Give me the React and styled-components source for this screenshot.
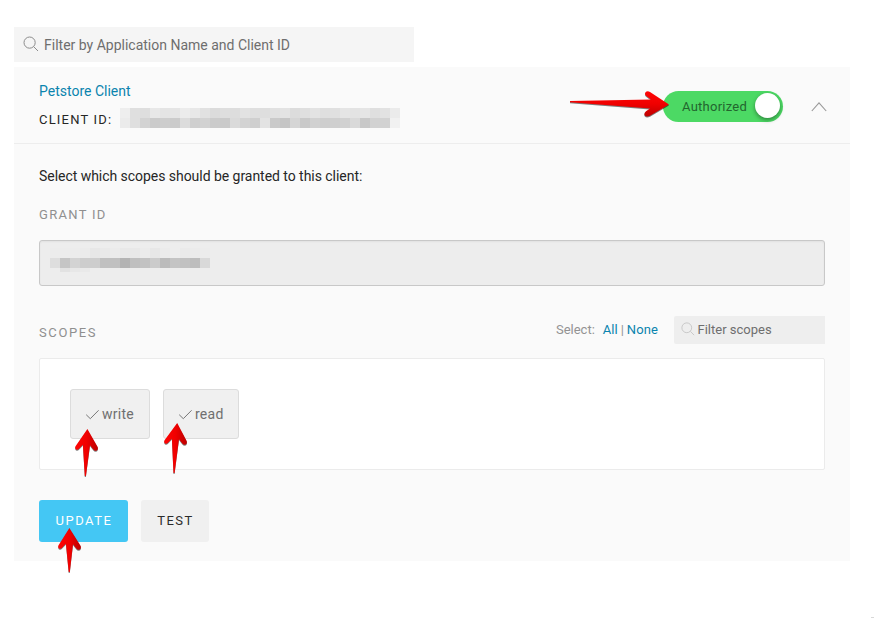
import React from 'react';
import styled, { createGlobalStyle } from 'styled-components';

const GlobalStyle = createGlobalStyle`
  * { box-sizing: border-box; }
  body {
    margin: 0;
    background: #fff;
    color: #262626;
    font: 400 14px/20px Roboto, sans-serif;
  }
`;

const Page = styled.main`
  position: relative;
  width: 874px;
  height: 618px;
  padding: 27px 24px 0 14px;
  overflow: hidden;
`;

const SearchBox = styled.label`
  display: flex;
  align-items: center;
  gap: ${p => (p.$small ? 2.5 : 5)}px;
  width: ${p => (p.$small ? 151 : 400)}px;
  height: ${p => (p.$small ? 28 : 35)}px;
  padding-left: ${p => (p.$small ? 7 : 9)}px;
  background: ${p => (p.$small ? '#eeeeee' : '#f5f5f5')};
  border-radius: ${p => (p.$small ? '2px 0 0 2px' : 0)};
  color: #6e6e6e;
  font-size: ${p => (p.$small ? 13 : 14)}px;
  padding-top: ${p => (p.$small ? 0 : 1)}px;

  svg {
    position: relative;
    top: -1px;
    flex: none;
    color: ${p => (p.$small ? '#c4c4c4' : '#8c8c8c')};
  }
`;

const Panel = styled.section`
  width: 836px;
  height: 494px;
  margin-top: 5px;
  background: #fafafa;
`;

const PanelHeader = styled.header`
  display: flex;
  align-items: flex-start;
  height: 77px;
  padding: 14px 23px 0 25px;
  border-bottom: 1px solid #ededed;
`;

const ClientInfo = styled.div`
  flex: 1;
`;

const ClientName = styled.a`
  display: block;
  color: #0a84ae;
`;

const ClientId = styled.div`
  display: flex;
  align-items: flex-start;
  margin-top: 7px;
`;

const Caps = styled.span`
  font-size: 13px;
  line-height: ${p => p.$line ?? 22}px;
  letter-spacing: ${p => p.$spacing ?? 1.3}px;
  color: ${p => (p.$muted ? '#8f8f8f' : '#262626')};
`;

const Redacted = styled.div`
  display: grid;
  grid-template-columns: repeat(${p => p.$columns}, 10px);
  grid-auto-rows: 10px;
`;

const Cell = styled.span`
  background: ${p => p.$tone};
  height: ${p => p.$height ?? 10}px;
`;

const IdLabel = styled.span`
  width: 81px;
`;

const Toggle = styled.button`
  display: flex;
  align-items: center;
  justify-content: space-between;
  width: 120px;
  height: 31px;
  margin-top: 9.5px;
  padding: 1px 3px 0 19px;
  border: 0;
  border-radius: 16px;
  background: #4cd964;
  color: #23652e;
  font: 450 13px/20px Roboto, sans-serif;
  letter-spacing: 0.25px;
`;

const Knob = styled.span`
  width: 25px;
  height: 25px;
  margin-top: -2px;
  border-radius: 50%;
  background: #fff;
  box-shadow: 0 2px 4px rgba(0, 0, 0, 0.38);
`;

const Collapse = styled.span`
  display: flex;
  margin: 20px 0 0 28px;
`;

const PanelBody = styled.div`
  padding: 22px 25px 0;
`;

const Intro = styled.p`
  margin: 0;
  letter-spacing: -0.04px;
`;

const FieldLabel = styled.div`
  margin-top: 18px;
`;

const GrantField = styled.div`
  height: 46px;
  margin-top: 14px;
  padding: 7px 10px;
  border: 1px solid #c8c8c8;
  border-radius: 3px;
  background: #ededed;
  box-shadow: inset 0 1px 2px rgba(0, 0, 0, 0.05);
`;

const ScopesBar = styled.div`
  display: flex;
  align-items: center;
  height: 28px;
  margin-top: 30px;
`;

const ScopesTitle = styled.div`
  flex: 1;
  padding-top: 5px;
`;

const SelectLinks = styled.div`
  display: flex;
  margin: -1px 16px 0 0;
  color: #939393;
  font-size: 13px;
`;

const SelectLink = styled.a`
  color: #0a84ae;
  font-weight: ${p => (p.$strong ? 450 : 400)};
  letter-spacing: ${p => (p.$strong ? 0 : 0.1)}px;
  margin: 0 ${p => (p.$strong ? 3 : 0)}px 0 ${p => (p.$strong ? 8 : 3)}px;
`;

const ScopeList = styled.div`
  display: flex;
  gap: 13px;
  height: 112px;
  margin-top: 14px;
  padding: 30px;
  border: 1px solid #ebebeb;
  border-radius: 2px;
  background: #fff;
`;

const ScopeChip = styled.button`
  display: flex;
  align-items: center;
  gap: 2px;
  width: ${p => p.$width}px;
  height: 50px;
  padding: 0 0 0 14px;
  border: 1px solid #dcdcdc;
  border-radius: 3px;
  background: #f0f0f0;
  color: #6f6f6f;
  font: 450 14px/20px Roboto, sans-serif;
  letter-spacing: 0.25px;
`;

const Actions = styled.div`
  display: flex;
  gap: 13px;
  margin-top: 30px;
`;

const ActionButton = styled.button`
  width: ${p => (p.$primary ? 89 : 68)}px;
  height: 42px;
  padding: 0 0 1px 1px;
  border: 0;
  border-radius: 3px;
  background: ${p => (p.$primary ? '#44c7f4' : '#f0f0f0')};
  color: ${p => (p.$primary ? '#fff' : '#2b2b2b')};
  font: 450 13px/20px Roboto, sans-serif;
  letter-spacing: 1.5px;
`;

const Pointer = styled.svg`
  position: absolute;
  left: ${p => p.$x}px;
  top: ${p => p.$y}px;
  overflow: visible;
  filter: drop-shadow(0 1px 0.7px rgba(0, 0, 0, 0.5));
`;

const CornerMark = styled.span`
  position: absolute;
  right: 0;
  bottom: 0;
  width: 3px;
  height: 1px;
  background: #d8d8d8;
`;

const clientIdTones = [
  'eee dfdfdf dedede e8e8e8 e4e4e4 e5e5e5 ececec e8e8e8 e1e1e1 dbdbdb dedede dddddd e2e2e2 dfdfdf dedede e1e1e1 e3e3e3 dcdcdc dfdfdf e3e3e3 dfdfdf e0e0e0 e5e5e5 e3e3e3 e5e5e5 dfdfdf e2e2e2 ebebeb',
  'ebebeb dfdfdf d3d3d3 cbcbcb cdcdcd cbcbcb dcdcdc cfcfcf d2d2d2 cbcbcb cacaca dadada d3d3d3 cfcfcf e3e3e3 cacaca c5c5c5 d5d5d5 c9c9c9 d1d1d1 cecece cfcfcf d1d1d1 d9d9d9 c8c8c8 d2d2d2 d2d2d2 f1f1f1',
].join(' ').split(' ').map(c => `#${c}`);

const grantTones = [
  'ececec ececec ececec ebebeb e7e7e7 e9e9e9 ebebeb e8e8e8 e8e8e8 ebebeb e7e7e7 ebebeb ededed eaeaea ebebeb ececec',
  'dedede c5c5c5 d3d3d3 cdcdcd cdcdcd c0c0c0 c0c0c0 b3b3b3 bfbfbf c2c2c2 cbcbcb bbbbbb c4c4c4 c1c1c1 bdbdbd d9d9d9',
].join(' ').split(' ').map(c => `#${c}`).concat(['#ededed', '#e2e2e2', '#e7e7e7', '#e9e9e9']);

const SearchIcon = ({ size }) => (
  <svg width={size} height={size} viewBox="0 0 16 16" fill="none" stroke="currentColor" strokeWidth="1">
    <circle cx="6.6" cy="6.6" r="5.6" />
    <path d="M10.7 10.7 15 15" />
  </svg>
);

const CheckIcon = () => (
  <svg width="15" height="12" viewBox="0 0 15 12" fill="none" stroke="#777" strokeWidth="1">
    <path d="M1.2 6.7 5.3 10.7 13.6 2.3" />
  </svg>
);

const UpArrow = ({ x, y, id, height = 46, tail = 11, tip = 12.4 }) => (
  <Pointer $x={x} $y={y} width="24" height={height} viewBox={`0 0 24 ${height}`}>
    <defs>
      <linearGradient id={id}>
        <stop offset="0" stopColor="#ff0505" />
        <stop offset="0.5" stopColor="#f00000" />
        <stop offset="1" stopColor="#bd0000" />
      </linearGradient>
    </defs>
    <path
      fill={`url(#${id})`}
      d={`M${tip} 0 22.7 18Q23.5 21 21.2 21.7 19.5 22.1 18.3 20.5L15 16.3 ${tail + 0.6} ${height} ${tail - 0.5} ${height} 7.9 15.8 3.8 20Q2.4 21.5 .8 20.2-.4 18.9.7 17Z`}
    />
  </Pointer>
);

export default function App() {
  return (
    <>
      <GlobalStyle />
      <Page>
        <SearchBox>
          <SearchIcon size={16} />
          Filter by Application Name and Client ID
        </SearchBox>

        <Panel>
          <PanelHeader>
            <ClientInfo>
              <ClientName>Petstore Client</ClientName>
              <ClientId>
                <IdLabel><Caps $spacing={1.2} $line={24}>CLIENT ID:</Caps></IdLabel>
                <Redacted $columns={28}>
                  {clientIdTones.map((tone, i) => <Cell key={i} $tone={tone} />)}
                </Redacted>
              </ClientId>
            </ClientInfo>
            <Toggle>
              Authorized
              <Knob />
            </Toggle>
            <Collapse>
              <svg width="16" height="11" viewBox="0 0 16 11" fill="none" stroke="#999" strokeWidth="1.1">
                <path d="M.8 10 8 1.8 15.2 10" />
              </svg>
            </Collapse>
          </PanelHeader>

          <PanelBody>
            <Intro>Select which scopes should be granted to this client:</Intro>
            <FieldLabel><Caps $muted>GRANT ID</Caps></FieldLabel>
            <GrantField>
              <Redacted $columns={16}>
                {grantTones.map((tone, i) => <Cell key={i} $tone={tone} $height={i > 31 ? 4 : 10} />)}
              </Redacted>
            </GrantField>

            <ScopesBar>
              <ScopesTitle><Caps $muted $spacing={1.6}>SCOPES</Caps></ScopesTitle>
              <SelectLinks>
                Select:
                <SelectLink $strong>All</SelectLink>
                |
                <SelectLink>None</SelectLink>
              </SelectLinks>
              <SearchBox $small>
                <SearchIcon size={14} />
                Filter scopes
              </SearchBox>
            </ScopesBar>

            <ScopeList>
              <ScopeChip $width={80}><CheckIcon />write</ScopeChip>
              <ScopeChip $width={76}><CheckIcon />read</ScopeChip>
            </ScopeList>

            <Actions>
              <ActionButton $primary>UPDATE</ActionButton>
              <ActionButton>TEST</ActionButton>
            </Actions>
          </PanelBody>
        </Panel>

        <UpArrow id="writeArrow" x={74.5} y={428.5} height={47} tail={10.3} />
        <UpArrow id="readArrow" x={163.8} y={422.5} height={50} tail={10} tip={13.2} />
        <UpArrow id="updateArrow" x={57.5} y={527.5} height={44} tail={11.2} tip={11.4} />
        <Pointer $x={570} $y={90.5} width="99" height="26" viewBox="0 0 99 26">
          <defs>
            <linearGradient id="toggleArrow" x2="0" y2="1">
              <stop offset="0" stopColor="#ff0505" />
              <stop offset="0.5" stopColor="#f00000" />
              <stop offset="1" stopColor="#bd0000" />
            </linearGradient>
          </defs>
          <path
            fill="url(#toggleArrow)"
            d="M99 13.5 80 24.8Q76.5 26.5 74.8 24.5 73.5 22.5 76 20.3L80 17.5 0 11.2V10L81 8.6 76 4.7Q74 2.5 76 .8 77.7-.4 80 1Z"
          />
        </Pointer>
        <CornerMark />
      </Page>
    </>
  );
}
